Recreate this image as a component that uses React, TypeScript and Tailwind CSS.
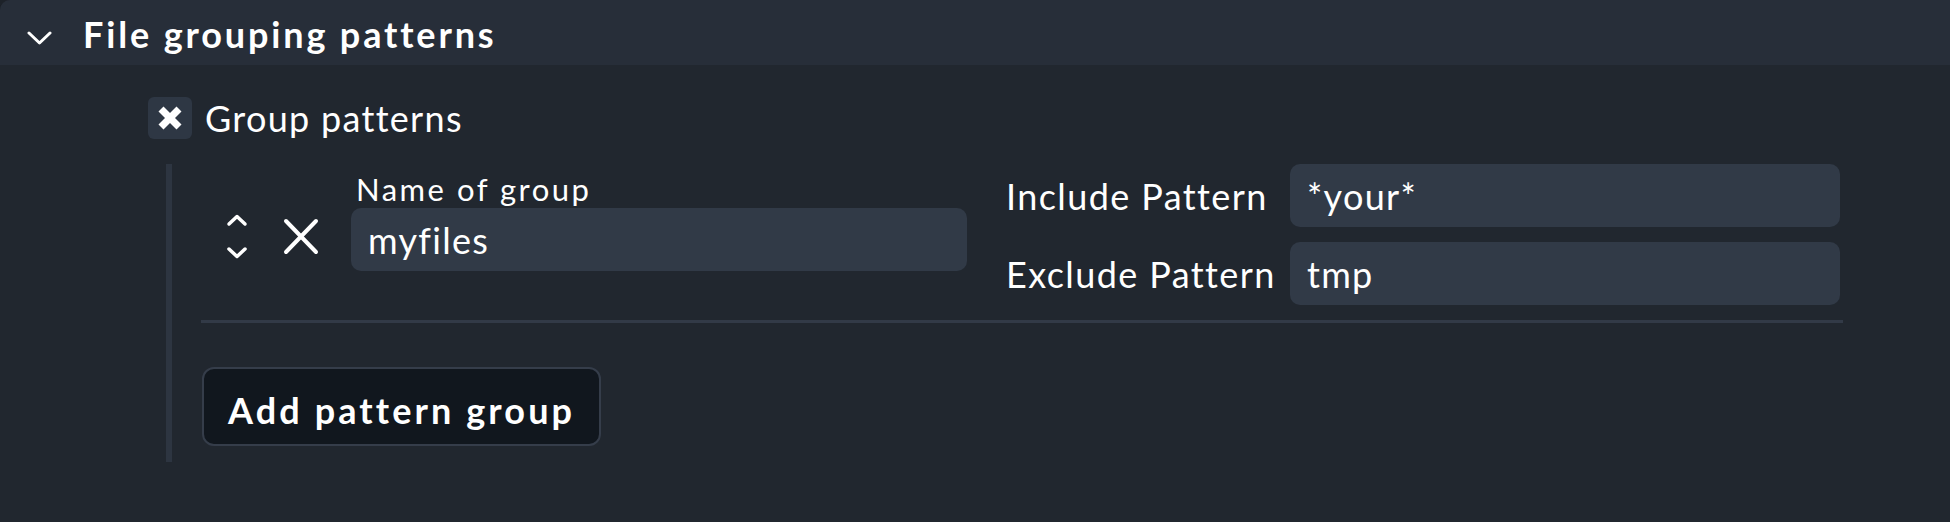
import React from 'react'

const font = { fontFamily: 'Lato, "Open Sans", sans-serif' }

const Chevron = () => (
  <svg width="25" height="14" viewBox="0 0 25 14" fill="none">
    <polyline points="2,2 12.5,12 23,2" stroke="white" strokeWidth="3" strokeLinecap="round" strokeLinejoin="round" />
  </svg>
)

const CheckMark = () => (
  <svg width="26" height="24" viewBox="0 0 26 24">
    <line x1="4" y1="3" x2="22" y2="21" stroke="white" strokeWidth="7" />
    <line x1="22" y1="3" x2="4" y2="21" stroke="white" strokeWidth="7" />
  </svg>
)

const MoveIcon = () => (
  <svg width="22" height="46" viewBox="0 0 22 46" fill="none">
    <polyline points="3,10 11,2.5 19,10" stroke="white" strokeWidth="3.5" strokeLinecap="round" strokeLinejoin="round" />
    <polyline points="3,35 11,42.5 19,35" stroke="white" strokeWidth="3.5" strokeLinecap="round" strokeLinejoin="round" />
  </svg>
)

const DeleteIcon = () => (
  <svg width="36" height="37" viewBox="0 0 36 37" fill="none">
    <line x1="3" y1="3" x2="33" y2="34" stroke="white" strokeWidth="4" strokeLinecap="round" />
    <line x1="33" y1="3" x2="3" y2="34" stroke="white" strokeWidth="4" strokeLinecap="round" />
  </svg>
)

const TextInput = ({ value, className }: { value: string; className: string }) => (
  <div className={`h-[63px] rounded-[10px] bg-[#313a47] pl-[17px] flex items-center text-[36px] tracking-[1.3px] text-white ${className}`}>
    {value}
  </div>
)

export default function App() {
  return (
    <div className="w-[1950px] h-[522px] bg-[#1d2229]" style={font}>
      <div className="h-full bg-[#21272f] rounded-tl-[10px] overflow-hidden">
        <div className="h-[65px] bg-[#272e39] flex items-center pl-[27px]">
          <div className="pt-[11px] flex">
            <Chevron />
          </div>
          <h2 className="ml-[31px] pt-[3px] text-[36px] font-bold tracking-[2.85px] text-white">File grouping patterns</h2>
        </div>

        <div className="pl-[148px] pt-[32px]">
          <div className="flex items-center gap-[13px]">
            <div className="w-[44px] h-[42px] rounded-[6px] bg-[#2e3744] flex items-center justify-center">
              <CheckMark />
            </div>
            <span className="text-[36px] leading-[42px] tracking-[1.3px] text-white">Group patterns</span>
          </div>

          <div className="ml-[18px] mt-[25px] border-l-[6px] border-[#2d3541] pl-[30px] pb-[16px] w-[1677px]">
            <div className="flex items-start">
              <div className="flex items-center h-[63px] mt-[44px] pb-[6px]">
                <div className="ml-[24px] flex">
                  <MoveIcon />
                </div>
                <div className="ml-[35px] flex">
                  <DeleteIcon />
                </div>
              </div>
              <div className="ml-[32px] w-[616px]">
                <div className="h-[44px] pt-[7px] pl-[5px] text-[31px] leading-[36px] tracking-[2.5px] text-white">Name of group</div>
                <TextInput value="myfiles" className="w-[616px]" />
              </div>
              <div className="ml-[39px] grid grid-cols-[284px_550px] gap-y-[15px]">
                <div className="h-[63px] flex items-center text-[36px] tracking-[1.4px] text-white">Include Pattern</div>
                <TextInput value="*your*" className="w-[550px]" />
                <div className="h-[63px] flex items-center text-[36px] tracking-[1.4px] text-white">Exclude Pattern</div>
                <TextInput value="tmp" className="w-[550px]" />
              </div>
            </div>

            <div className="mt-[15px] h-[3px] bg-[#323a47] w-[1642px] -ml-[1px]"></div>

            <button className="mt-[44px] h-[79px] px-[24px] pt-[7px] rounded-[12px] border-2 border-[#353d4a] bg-[#11171e] text-[36px] font-bold tracking-[3.1px] text-white">
              Add pattern group
            </button>
          </div>
        </div>
      </div>
    </div>
  )
}
